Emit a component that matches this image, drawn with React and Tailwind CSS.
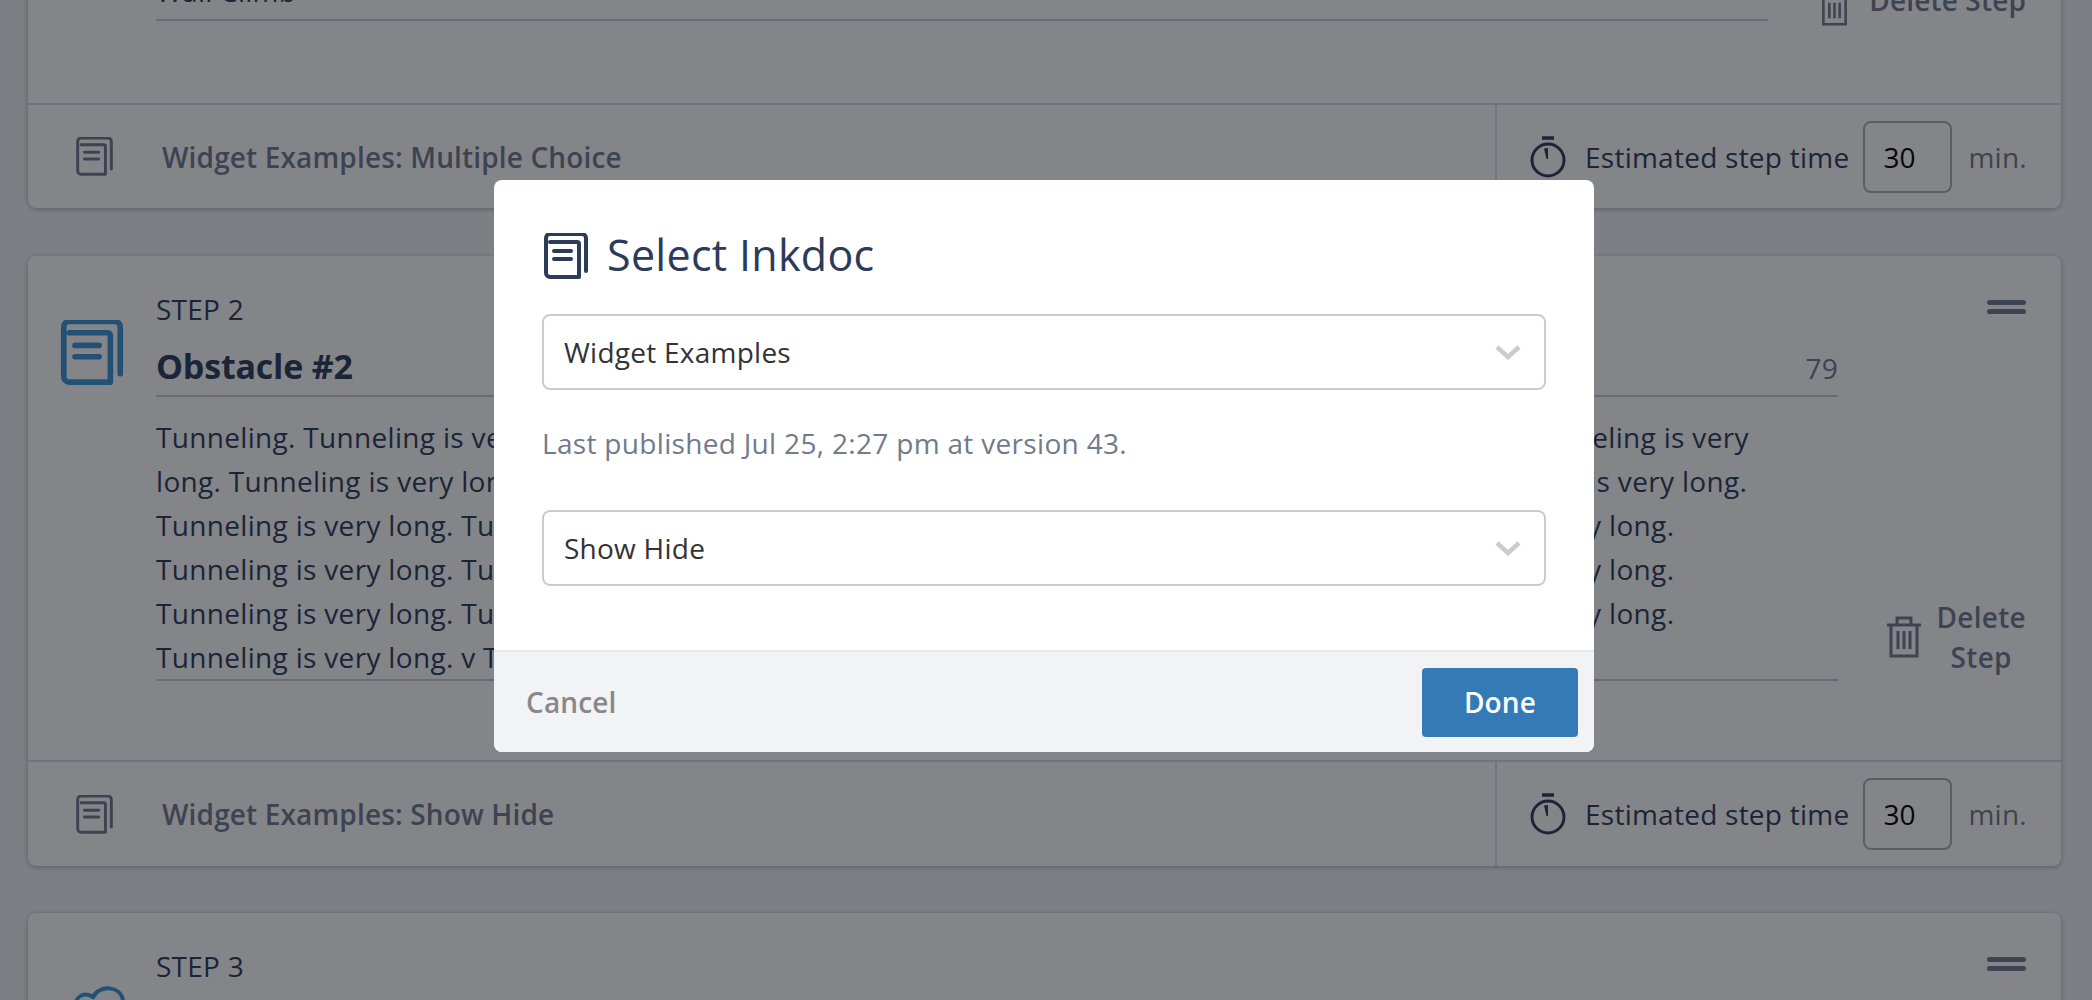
import React from 'react'

function BookIcon({ className, strokeWidth = 4 }) {
    return (
        <svg viewBox="0 0 44 46" fill="none" stroke="currentColor" strokeWidth={strokeWidth} strokeLinecap="round" strokeLinejoin="round" className={className}>
            <path d="M6 9H33a2 2 0 0 1 2 2V44H6a4 4 0 0 1-4-4V5a4 4 0 0 1 4-4H38a4 4 0 0 1 4 4V38" />
            <path d="M10 18H27M10 26H27" />
        </svg>
    )
}

function TimerIcon() {
    return (
        <svg viewBox="0 0 36 42" fill="none" stroke="currentColor" strokeWidth="3" className="w-[36px] h-[42px] shrink-0 text-[#2b3b59]">
            <circle cx="18" cy="24" r="16" />
            <path d="M12 2H24" strokeWidth="3.5" />
            <path d="M14 12.5L18 12V23L16.5 23Z" fill="currentColor" stroke="none" />
        </svg>
    )
}

function TrashIcon({ className }) {
    return (
        <svg viewBox="0 0 36 42" fill="none" stroke="currentColor" strokeWidth="3" className={className}>
            <path d="M1 9H35M11 9V2H25V9M5 9V40H31V9" />
            <path d="M12 15V33M18 15V33M24 15V33" />
        </svg>
    )
}

function Burger() {
    return (
        <div className="flex flex-col gap-[4px]">
            <div className="w-[39px] h-[5px] rounded-full bg-[#71798f]"></div>
            <div className="w-[39px] h-[5px] rounded-full bg-[#71798f]"></div>
        </div>
    )
}

function Chevron() {
    return (
        <svg viewBox="0 0 26 15" fill="none" stroke="#cccccc" strokeWidth="4.5" className="w-[26px] h-[15px]">
            <path d="M2 2L13 12L24 2" />
        </svg>
    )
}

function CardFooter({ title, height }) {
    return (
        <div className={`flex ${height} border-t-2 border-[#dbdde3]`}>
            <div className="flex-1 flex items-center pl-[48px]">
                <BookIcon strokeWidth={3.5} className="w-[37px] h-[39px] text-[#71798f]" />
                <span className="ml-[49px] text-[28px] font-semibold tracking-[0.15px] text-[#71798f]">{title}</span>
            </div>
            <div className="w-[566px] border-l-2 border-[#dbdde3] flex items-center pl-[33px]">
                <TimerIcon />
                <span className="ml-[19px] text-[28px] tracking-[0.25px] text-[#2b3b59] whitespace-nowrap">Estimated step time</span>
                <input
                    readOnly
                    value="30"
                    className="ml-[14px] w-[89px] h-[72px] rounded-lg border-2 border-[#abafbd] pl-[18px] text-[28px] text-black outline-none bg-transparent"
                />
                <span className="ml-[16px] text-[28px] tracking-[0.25px] text-[#71798f]">min.</span>
            </div>
        </div>
    )
}

function Select({ value }) {
    return (
        <div className="h-[76px] rounded-lg border-2 border-[#cccccc] flex items-center justify-between pl-[20px] pr-[23px]">
            <span className="text-[28px] tracking-[0.25px] text-[#333333]">{value}</span>
            <Chevron />
        </div>
    )
}

const longLines = [
    'Tunneling. Tunneling is very long. Tunneling is very long. Tunneling is very long. Tunneling is very long. Tunneling is very',
    'long. Tunneling is very long. Tunneling is very long. Tunneling is very long. Tunneling is very long. Tunneling is very long.',
    'Tunneling is very long. Tunneling is very long. Tunneling is very long. Tunneling is very long. Tunneling is very long.',
    'Tunneling is very long. Tunneling is very long. Tunneling is very long. Tunneling is very long. Tunneling is very long.',
    'Tunneling is very long. Tunneling is very long. Tunneling is very long. Tunneling is very long. Tunneling is very long.',
    'Tunneling is very long. v Tunneling is very long. Tunneling is very long.',
]

export default function App() {
    return (
        <div className="relative h-[1000px] overflow-hidden bg-[#f3f3f7] font-['Open_Sans',sans-serif] pl-[28px] pr-[31px]">
            {/* step 1, scrolled off the top */}
            <div className="mt-[-60px] rounded-lg bg-white shadow-[0_1px_5px_rgba(0,0,0,0.3)]">
                <div className="flex h-[163px] pl-[128px] pr-[35px]">
                    <div className="flex-1 h-[81px] border-b-2 border-[#cbcdd7] flex items-end pb-[7px]">
                        <span className="text-[28px] tracking-[0.25px] text-[#2b3b59]">Wall Climb</span>
                    </div>
                    <div className="ml-[51px] h-[81px] flex items-end">
                        <TrashIcon className="w-[31px] h-[36px] text-[#71798f] mb-[-5px]" />
                        <span className="ml-[19px] text-[28px] font-semibold tracking-[0.15px] text-[#71798f] whitespace-nowrap">Delete Step</span>
                    </div>
                </div>
                <CardFooter title="Widget Examples: Multiple Choice" height="h-[105px]" />
            </div>

            {/* step 2 */}
            <div className="mt-[48px] rounded-lg bg-white shadow-[0_1px_5px_rgba(0,0,0,0.3)]">
                <div className="flex h-[504px] pt-[31px] pr-[35px]">
                    <div className="w-[128px] pl-[32px] pt-[33px] shrink-0">
                        <BookIcon className="w-[64px] h-[65px] text-[#3a93d6]" />
                    </div>
                    <div className="flex-1 min-w-0">
                        <div className="h-[44px] leading-[44px] text-[28px] tracking-[0.25px] text-[#2b3b59]">STEP 2</div>
                        <div className="h-[66px] pt-[6px] border-b-2 border-[#cbcdd7] flex justify-between items-center">
                            <span className="text-[34px] font-bold tracking-[-0.2px] text-[#2b3b59]">Obstacle #2</span>
                            <span className="pt-[3px] text-[28px] tracking-[0.25px] text-[#71798f]">79</span>
                        </div>
                        <div className="mt-[18px] border-b-2 border-[#cbcdd7] text-[28px] leading-[44px] tracking-[0.32px] text-[#2b3b59] whitespace-nowrap">
                            {longLines.map((line, i) => (
                                <div key={i}>{line}</div>
                            ))}
                        </div>
                    </div>
                    <div className="ml-[48px] w-[140px] h-[390px] flex flex-col items-end justify-between pt-[13px]">
                        <Burger />
                        <div className="flex items-center w-full justify-between">
                            <TrashIcon className="w-[36px] h-[42px] text-[#71798f]" />
                            <span className="text-[28px] leading-[40px] font-semibold tracking-[0.3px] text-[#71798f] text-center">Delete<br />Step</span>
                        </div>
                    </div>
                </div>
                <CardFooter title="Widget Examples: Show Hide" height="h-[106px]" />
            </div>

            {/* step 3 */}
            <div className="mt-[47px] rounded-lg bg-white shadow-[0_1px_5px_rgba(0,0,0,0.3)] h-[300px] flex pt-[31px] pr-[35px]">
                <div className="w-[128px] pl-[45px] pt-[42px] shrink-0">
                    <svg viewBox="0 0 52 40" fill="none" stroke="#3a93d6" strokeWidth="4" className="w-[52px] h-[40px]">
                        <path d="M2 20C3 9 12 6 20 11C26 -1 47 -1 50 14V30" />
                    </svg>
                </div>
                <div className="flex-1 h-[44px] leading-[44px] text-[28px] tracking-[0.25px] text-[#2b3b59]">STEP 3</div>
                <div className="pt-[13px]">
                    <Burger />
                </div>
            </div>

            {/* backdrop and modal */}
            <div className="absolute inset-0 bg-[#0d0f18]/[0.51] flex justify-center items-start pt-[180px]">
                <div className="w-[1100px] h-[572px] ml-[-4px] rounded-lg bg-white overflow-hidden flex flex-col">
                    <div className="flex-1 px-[48px]">
                        <div className="flex items-center h-[45px] mt-[53px]">
                            <BookIcon className="ml-[2px] w-[44px] h-[46px] text-[#2b3b59]" />
                            <span className="ml-[19px] text-[43px] tracking-[0.3px] text-[#2b3b59]">Select Inkdoc</span>
                        </div>
                        <div className="mt-[36px]">
                            <Select value="Widget Examples" />
                        </div>
                        <div className="mt-[33px] h-[40px] leading-[40px] text-[28px] tracking-[0.32px] text-[#717a8c]">Last published Jul 25, 2:27 pm at version 43.</div>
                        <div className="mt-[47px]">
                            <Select value="Show Hide" />
                        </div>
                    </div>
                    <div className="h-[102px] border-t-2 border-[#e6e7ea] bg-[#f2f3f5] flex items-center justify-between pl-[32px] pr-[16px]">
                        <span className="text-[28px] font-semibold tracking-[0.15px] text-[#88888c]">Cancel</span>
                        <button type="button" className="w-[156px] h-[69px] rounded bg-[#337ab7] text-white text-[28px] font-semibold tracking-[0.15px]">Done</button>
                    </div>
                </div>
            </div>
        </div>
    )
}
